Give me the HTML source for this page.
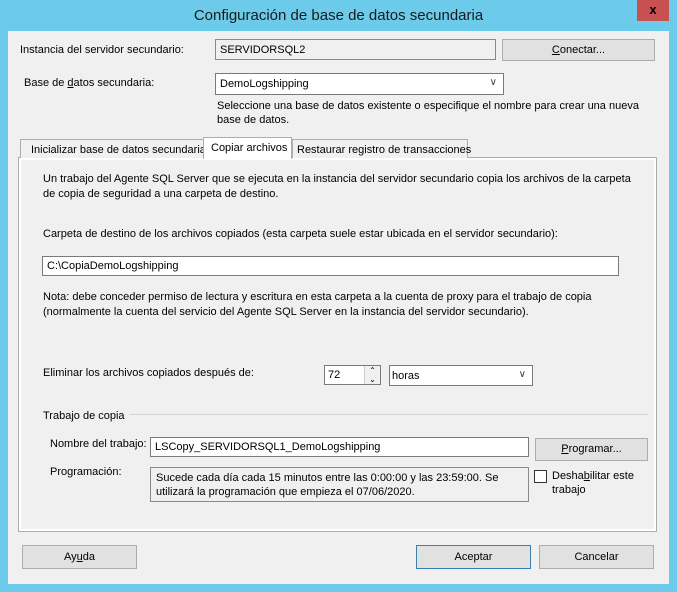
<!DOCTYPE html><html><head><style>
body{margin:0;width:677px;height:592px;background:#6ccbea;font-family:"Liberation Sans",sans-serif;font-size:11px;color:#000;position:relative;overflow:hidden}
div,span{position:absolute;box-sizing:border-box}
.t{white-space:nowrap}
.box{background:#fff;border:1px solid #7a7a7a;padding:3px 4px}
.btn{background:#e1e1e1;border:1px solid #adadad;text-align:center;line-height:20px}
.ro{background:#f0f0f0;border:1px solid #8a8a8a;padding:3px 4px}
.arr{right:6px;top:3px;font-size:10px;color:#444}
</style></head><body>
<div class="t" style="left:0;width:677px;top:7px;text-align:center;font-size:15px;color:#1a1a1a">Configuración de base de datos secundaria</div>
<div style="left:637px;top:0;width:32px;height:21px;background:#c75050;color:#000;font-weight:bold;text-align:center;line-height:20px;font-size:13px">x</div>
<div style="left:8px;top:31px;width:661px;height:553px;background:#f0f0f0"></div>
<div class="t" style="left:20px;top:44px">Instancia del servidor secundario:</div>
<div class="ro" style="left:215px;top:39px;width:281px;height:21px;background:#f0f0f0;padding:4px 4px">SERVIDORSQL2</div>
<div class="btn" style="left:502px;top:39px;width:153px;height:22px"><u>C</u>onectar...</div>
<div class="t" style="left:24px;top:77px">Base de <u>d</u>atos secundaria:</div>
<div class="box" style="left:215px;top:73px;width:289px;height:22px;padding:4px 4px">DemoLogshipping<span class="arr">&#8744;</span></div>
<div style="left:217px;top:99px;width:440px;line-height:14px">Seleccione una base de datos existente o especifique el nombre para crear una nueva base de datos.</div>
<div style="left:18px;top:157px;width:639px;height:375px;border:1px solid #adadad;background:#fff"></div>
<div style="left:21px;top:160px;width:633px;height:369px;background:#f0f0f0"></div>
<div class="t" style="left:20px;top:139px;width:184px;height:19px;border:1px solid #adadad;border-bottom:none;background:#f0f0f0;padding:4px 0 0 10px">Inicializar base de datos secundaria</div>
<div class="t" style="left:292px;top:139px;width:176px;height:19px;border:1px solid #adadad;border-bottom:none;background:#f0f0f0;padding:4px 0 0 4px">Restaurar registro de transacciones</div>
<div class="t" style="left:203px;top:137px;width:89px;height:22px;border:1px solid #adadad;border-bottom:none;background:#fff;padding:4px 0 0 7px">Copiar archivos</div>
<div style="left:43px;top:172px;width:600px;line-height:15px">Un trabajo del Agente SQL Server que se ejecuta en la instancia del servidor secundario copia los archivos de la carpeta de copia de seguridad a una carpeta de destino.</div>
<div class="t" style="left:43px;top:228px">Carpeta de destino de los archivos copiados (esta carpeta suele estar ubicada en el servidor secundario):</div>
<div class="box" style="left:42px;top:256px;width:577px;height:20px;padding:3px 4px">C:\CopiaDemoLogshipping</div>
<div style="left:43px;top:290px;width:605px;line-height:15px">Nota: debe conceder permiso de lectura y escritura en esta carpeta a la cuenta de proxy para el trabajo de copia (normalmente la cuenta del servicio del Agente SQL Server en la instancia del servidor secundario).</div>
<div class="t" style="left:43px;top:367px">Eliminar los archivos copiados después de:</div>
<div class="box" style="left:324px;top:365px;width:57px;height:20px;padding:3px 3px">72</div>
<div style="left:364px;top:366px;width:16px;height:18px;background:#f0f0f0;border-left:1px solid #ccc;font-size:8px;text-align:center;line-height:9px">&#8963;<br>&#8964;</div>
<div class="box" style="left:389px;top:365px;width:144px;height:21px;padding:4px 2px">horas<span class="arr">&#8744;</span></div>
<div class="t" style="left:43px;top:410px">Trabajo de copia</div>
<div style="left:130px;top:414px;width:518px;height:1px;background:#d5d5d5"></div>
<div class="t" style="left:50px;top:438px">Nombre del trabajo:</div>
<div class="box" style="left:150px;top:437px;width:379px;height:20px;padding:3px 4px">LSCopy_SERVIDORSQL1_DemoLogshipping</div>
<div class="btn" style="left:535px;top:438px;width:113px;height:23px"><u>P</u>rogramar...</div>
<div class="t" style="left:50px;top:466px">Programación:</div>
<div class="ro" style="left:150px;top:467px;width:379px;height:35px;line-height:14px;padding:3px 5px">Sucede cada día cada 15 minutos entre las 0:00:00 y las 23:59:00. Se utilizará la programación que empieza el 07/06/2020.</div>
<div style="left:534px;top:470px;width:13px;height:13px;border:1px solid #333;background:#fff"></div>
<div style="left:552px;top:469px;line-height:14px">Desha<u>b</u>ilitar este<br>trabajo</div>
<div class="btn" style="left:22px;top:545px;width:115px;height:24px;line-height:22px">Ay<u>u</u>da</div>
<div class="btn" style="left:416px;top:545px;width:115px;height:24px;line-height:22px;border-color:#3c7fb1">Aceptar</div>
<div class="btn" style="left:539px;top:545px;width:115px;height:24px;line-height:22px">Cancelar</div>
</body></html>
